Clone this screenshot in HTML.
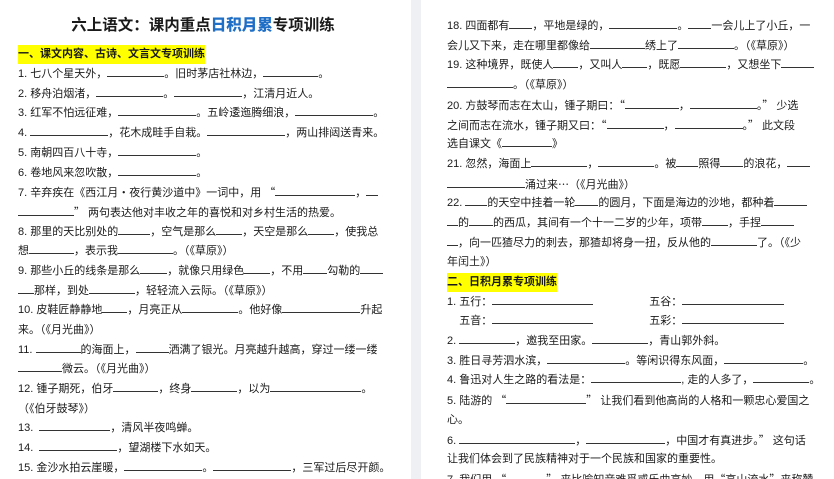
<!DOCTYPE html>
<html><head><meta charset="utf-8"><style>
html,body{margin:0;padding:0;width:834px;height:479px;overflow:hidden;background:#eef0f4;}
body{position:relative;font-family:"Liberation Sans","Noto Sans CJK SC",sans-serif;color:#1a1a1a;}
.page{position:absolute;top:0;height:479px;background:#fff;}
.blk{position:absolute;font-size:11px;line-height:19.7px;white-space:nowrap;}
.blk div{height:19.7px;}
.u{display:inline-block;border-bottom:1px solid #333;height:10px;vertical-align:baseline;}
.q{font-family:"Noto Sans CJK SC",sans-serif;}
.hl{background:#ffff00;font-weight:bold;display:inline-block;line-height:19px;}
.title{position:absolute;left:0;width:406px;top:13px;text-align:center;font-size:15.5px;font-weight:bold;}
.title b{color:#1f6fc6;}
</style></head><body>
<div class="page" style="left:0;width:411px;"></div>
<div class="page" style="left:421px;width:413px;"></div>
<div class="title">六上语文：课内重点<b>日积月累</b>专项训练</div>
<div class="blk" style="left:18px;top:45.4px;">
<div><span class="hl">一、课文内容、古诗、文言文专项训练</span></div>
<div>1. 七八个星天外，<span class="u" style="width:57px"></span>。旧时茅店社林边，<span class="u" style="width:55px"></span>。</div>
<div>2. 移舟泊烟渚，<span class="u" style="width:67px"></span>。<span class="u" style="width:68px"></span>，江清月近人。</div>
<div>3. 红军不怕远征难，<span class="u" style="width:78px"></span>。五岭逶迤腾细浪，<span class="u" style="width:78px"></span>。</div>
<div>4. <span class="u" style="width:78px"></span>，花木成畦手自栽。<span class="u" style="width:78px"></span>，两山排闼送青来。</div>
<div>5. 南朝四百八十寺，<span class="u" style="width:78px"></span>。</div>
<div>6. 卷地风来忽吹散，<span class="u" style="width:78px"></span>。</div>
<div>7. 辛弃疾在《西江月<span class="q">·</span>夜行黄沙道中》一词中，用 <span class="q">“</span><span class="u" style="width:80px"></span>，<span class="u" style="width:12px"></span></div>
<div><span class="u" style="width:56px"></span><span class="q">”</span> 两句表达他对丰收之年的喜悦和对乡村生活的热爱。</div>
<div>8. 那里的天比别处的<span class="u" style="width:32px"></span>，空气是那么<span class="u" style="width:26px"></span>，天空是那么<span class="u" style="width:26px"></span>，使我总</div>
<div>想<span class="u" style="width:45px"></span>，表示我<span class="u" style="width:55px"></span>。（《草原》）</div>
<div>9. 那些小丘的线条是那么<span class="u" style="width:27px"></span>，就像只用绿色<span class="u" style="width:26px"></span>，不用<span class="u" style="width:24px"></span>勾勒的<span class="u" style="width:23px"></span></div>
<div><span class="u" style="width:16px"></span>那样，到处<span class="u" style="width:46px"></span>，轻轻流入云际。（《草原》）</div>
<div>10. 皮鞋匠静静地<span class="u" style="width:25px"></span>，月亮正从<span class="u" style="width:56px"></span>。他好像<span class="u" style="width:78px"></span>升起</div>
<div>来。（《月光曲》）</div>
<div>11. <span class="u" style="width:45px"></span>的海面上，<span class="u" style="width:33px"></span>洒满了银光。月亮越升越高，穿过一缕一缕</div>
<div><span class="u" style="width:44px"></span>微云。（《月光曲》）</div>
<div>12. 锺子期死，伯牙<span class="u" style="width:45px"></span>，终身<span class="u" style="width:46px"></span>，以为<span class="u" style="width:91px"></span>。</div>
<div>（《伯牙鼓琴》）</div>
<div>13. &nbsp;<span class="u" style="width:71px"></span>，清风半夜鸣蝉。</div>
<div>14. &nbsp;<span class="u" style="width:78px"></span>，望湖楼下水如天。</div>
<div>15. 金沙水拍云崖暖，<span class="u" style="width:78px"></span>。<span class="u" style="width:78px"></span>，三军过后尽开颜。</div>
</div>
<div class="blk" style="left:447px;top:17.1px;">
<div>18. 四面都有<span class="u" style="width:23px"></span>，平地是绿的，<span class="u" style="width:68px"></span>。<span class="u" style="width:23px"></span>一会儿上了小丘，一</div>
<div>会儿又下来，走在哪里都像给<span class="u" style="width:55px"></span>绣上了<span class="u" style="width:56px"></span>。（《草原》）</div>
<div>19. 这种境界，既使人<span class="u" style="width:25px"></span>，又叫人<span class="u" style="width:25px"></span>，既愿<span class="u" style="width:46px"></span>，又想坐下<span class="u" style="width:33px"></span></div>
<div><span class="u" style="width:66px"></span>。（《草原》）</div>
<div>20. 方鼓琴而志在太山，锺子期曰：<span class="q">“</span><span class="u" style="width:54px"></span>，<span class="u" style="width:67px"></span>。<span class="q">”</span> 少选</div>
<div>之间而志在流水，锺子期又曰：<span class="q">“</span><span class="u" style="width:57px"></span>，<span class="u" style="width:68px"></span>。<span class="q">”</span> 此文段</div>
<div>选自课文《<span class="u" style="width:50px"></span>》</div>
<div>21. 忽然，海面上<span class="u" style="width:56px"></span>，<span class="u" style="width:56px"></span>。被<span class="u" style="width:22px"></span>照得<span class="u" style="width:23px"></span>的浪花，<span class="u" style="width:23px"></span></div>
<div><span class="u" style="width:78px"></span>涌过来<span class="q">…</span>（《月光曲》）</div>
<div>22. <span class="u" style="width:22px"></span>的天空中挂着一轮<span class="u" style="width:23px"></span>的圆月，下面是海边的沙地，都种着<span class="u" style="width:33px"></span></div>
<div><span class="u" style="width:11px"></span>的<span class="u" style="width:24px"></span>的西瓜，其间有一个十一二岁的少年，项带<span class="u" style="width:26px"></span>，手捏<span class="u" style="width:33px"></span></div>
<div><span class="u" style="width:11px"></span>，向一匹猹尽力的刺去，那猹却将身一扭，反从他的<span class="u" style="width:46px"></span>了。（《少</div>
<div>年闰土》）</div>
<div><span class="hl">二、日积月累专项训练</span></div>
<div>1. 五行：<span class="u" style="width:101px"></span><span style="display:inline-block;width:56px"></span>五谷：<span class="u" style="width:102px"></span></div>
<div>&nbsp;&nbsp;&nbsp; 五音：<span class="u" style="width:101px"></span><span style="display:inline-block;width:56px"></span>五彩：<span class="u" style="width:102px"></span></div>
<div>2. <span class="u" style="width:56px"></span>，邀我至田家。<span class="u" style="width:56px"></span>，青山郭外斜。</div>
<div>3. 胜日寻芳泗水滨，<span class="u" style="width:78px"></span>。等闲识得东风面，<span class="u" style="width:79px"></span>。</div>
<div>4. 鲁迅对人生之路的看法是：<span class="u" style="width:90px"></span>, 走的人多了，<span class="u" style="width:56px"></span>。</div>
<div>5. 陆游的 <span class="q">“</span><span class="u" style="width:80px"></span><span class="q">”</span> 让我们看到他高尚的人格和一颗忠心爱国之</div>
<div>心。</div>
<div>6. <span class="u" style="width:116px"></span>，<span class="u" style="width:79px"></span>，中国才有真进步。<span class="q">”</span> 这句话</div>
<div>让我们体会到了民族精神对于一个民族和国家的重要性。</div>
<div>7. 我们用 <span class="q">“</span><span class="u" style="width:40px"></span><span class="q">”</span> 来比喻知音难觅或乐曲高妙，用<span class="q">“</span>高山流水<span class="q">”</span>来称赞</div>
</div>
</body></html>
